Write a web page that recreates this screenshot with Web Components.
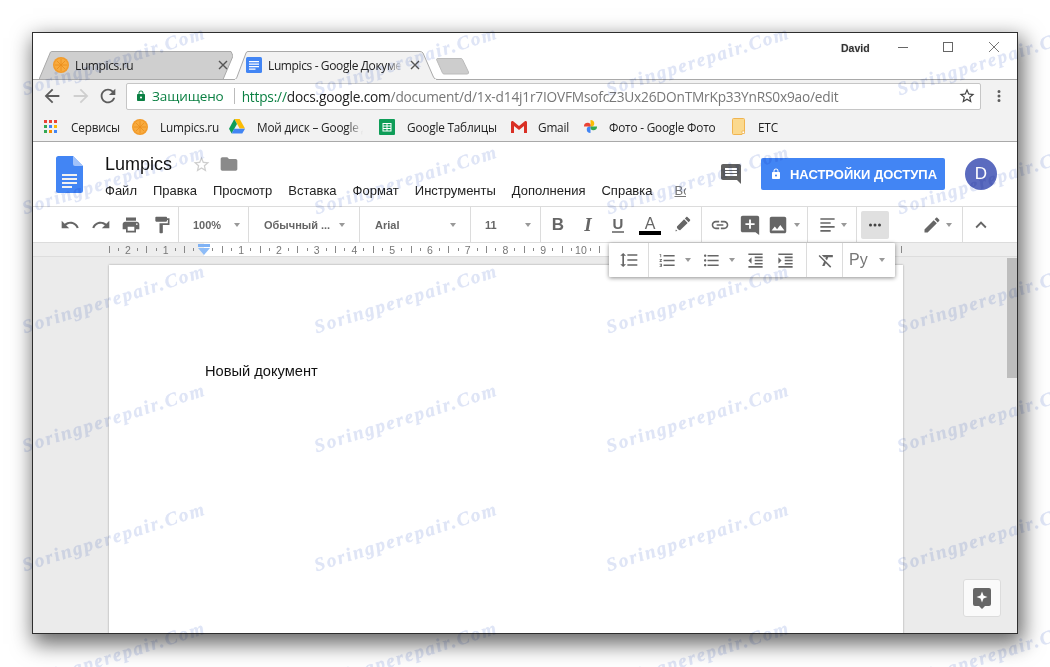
<!doctype html>
<html lang="ru"><head><meta charset="utf-8"><title>Lumpics - Google Документы</title>
<style>
html,body{margin:0;padding:0;background:#fff;overflow:hidden;width:1050px;height:667px;font-family:"Liberation Sans",Arial,sans-serif}
body{position:relative}
</style></head><body>
<x-desktop>
  <x-window>
    <x-tabstrip>
      <x-tab slot="tabs" label="Lumpics.ru" w="194" title-w="135" fav="orange"></x-tab>
      <x-tab slot="tabs" label="Lumpics - Google Документы" w="205" title-w="134" fav="doc" active></x-tab>
      <x-newtab slot="tabs"></x-newtab>
    </x-tabstrip>
    <x-omnibar></x-omnibar>
    <x-bookmarks></x-bookmarks>
    <x-docheader></x-docheader>
    <x-toolbar></x-toolbar>
    <x-ruler></x-ruler>
    <x-canvas>Новый документ</x-canvas>
    <x-floatbar></x-floatbar>
  </x-window>
</x-desktop>
<x-marks></x-marks>
<script>
const P={
undo:"M12.5 8c-2.65 0-5.05.99-6.9 2.6L2 7v9h9l-3.62-3.62c1.39-1.16 3.16-1.88 5.12-1.88 3.54 0 6.55 2.31 7.6 5.5l2.37-.78C21.08 11.03 17.15 8 12.5 8z",
redo:"M18.4 10.6C16.55 8.99 14.15 8 11.5 8c-4.65 0-8.58 3.03-9.96 7.22L3.9 16c1.05-3.19 4.05-5.5 7.6-5.5 1.95 0 3.73.72 5.12 1.88L13 16h9V7l-3.6 3.6z",
print:"M19 8H5c-1.66 0-3 1.34-3 3v6h4v4h12v-4h4v-6c0-1.66-1.34-3-3-3zm-3 11H8v-5h8v5zm3-7c-.55 0-1-.45-1-1s.45-1 1-1 1 .45 1 1-.45 1-1 1zm-1-9H6v4h12V3z",
paint:"M18 4V3c0-.55-.45-1-1-1H5c-.55 0-1 .45-1 1v4c0 .55.45 1 1 1h12c.55 0 1-.45 1-1V6h1v4H9v11c0 .55.45 1 1 1h2c.55 0 1-.45 1-1v-9h8V4h-3z",
pencil:"M3 17.25V21h3.75L17.81 9.94l-3.75-3.75L3 17.25zM20.71 7.04c.39-.39.39-1.02 0-1.41l-2.34-2.34c-.39-.39-1.02-.39-1.41 0l-1.83 1.83 3.75 3.75 1.83-1.83z",
marker:"M3 20.500l2.500-.3-1.800-1.800zM5 16.500l2.500 2.500 1.500.2 9.500-9.200-4.500-4.500-9 9zM15 4.300l4.700 4.700 1.800-1.800c.4-.4.4-1 0-1.400l-3.300-3.300c-.4-.4-1-.4-1.400 0z",
link:"M3.9 12c0-1.71 1.39-3.1 3.1-3.1h4V7H7c-2.76 0-5 2.24-5 5s2.24 5 5 5h4v-1.900H7c-1.710 0-3.100-1.390-3.100-3.100zM8 13h8v-2H8v2zm9-6h-4v1.900h4c1.710 0 3.100 1.390 3.100 3.100s-1.390 3.100-3.100 3.100h-4V17h4c2.760 0 5-2.240 5-5s-2.240-5-5-5z",
addc:"M22 4c0-1.100-.9-2-2-2H4c-1.100 0-2 .9-2 2v14c0 1.100.9 2 2 2h14l4 3zM17 12h-4v4h-2v-4H7v-2h4V6h2v4h4z",
image:"M21 19V5c0-1.100-.9-2-2-2H5c-1.100 0-2 .9-2 2v14c0 1.100.9 2 2 2h14c1.100 0 2-.9 2-2zM8.500 13.500l2.500 3.010L14.500 12l4.500 6H5z",
align:"M3 4h18v2H3zM3 9h13v2H3zM3 14h18v2H3zM3 19h13v2H3z",
less:"M12 8l-6 6 1.410 1.410L12 10.830l4.590 4.580L18 14z",
spacing:"M6 7h2.500L5 3.500 1.500 7H4v10H1.500L5 20.500 8.500 17H6V7zm4-2v2h12V5H10zm0 14h12v-2H10v2zm0-6h12v-2H10v2z",
num:"M2 17h2v.5H3v1h1v.5H2v1h3v-4H2v1zm1-9h1V4H2v1h1v3zm-1 3h1.800L2 13.100v.9h3v-1H3.200L5 10.900V10H2v1zm5-6v2h14V5H7zm0 14h14v-2H7v2zm0-6h14v-2H7v2z",
bul:"M4 10.500c-.83 0-1.500.67-1.500 1.500s.67 1.500 1.500 1.500 1.500-.67 1.500-1.500-.67-1.500-1.500-1.500zm0-6c-.83 0-1.500.67-1.500 1.500S3.170 7.500 4 7.500 5.500 6.830 5.500 6 4.830 4.500 4 4.500zm0 12c-.83 0-1.500.68-1.500 1.500s.68 1.500 1.500 1.500 1.500-.68 1.500-1.500-.67-1.500-1.500-1.500zM7 19h14v-2H7v2zm0-6h14v-2H7v2zm0-8v2h14V5H7z",
outd:"M11 17h10v-2H11v2zm-8-5l4 4V8l-4 4zm0 9h18v-2H3v2zM3 3v2h18V3H3zm8 6h10V7H11v2zm0 4h10v-2H11v2z",
ind:"M3 21h18v-2H3v2zM3 8v8l4-4-4-4zm8 9h10v-2H11v2zM3 3v2h18V3H3zm8 6h10V7H11v2zm0 4h10v-2H11v2z",
clear:"M3.270 5L2 6.270l6.970 6.970L6.500 19h3l1.570-3.660L16.730 21 18 19.730 3.550 5.270 3.270 5zM6 5v.18L8.820 8h2.400l-.72 1.680 2.100 2.100L14.210 8H20V5H6z",
lock:"M18 8h-1V6c0-2.760-2.240-5-5-5S7 3.240 7 6v2H6c-1.100 0-2 .9-2 2v10c0 1.100.9 2 2 2h12c1.100 0 2-.9 2-2V10c0-1.100-.9-2-2-2zm-6 9c-1.100 0-2-.9-2-2s.9-2 2-2 2 .9 2 2-.9 2-2 2zm3.100-9H8.900V6c0-1.710 1.390-3.100 3.100-3.100 1.710 0 3.100 1.390 3.100 3.100v2z",
comment:"M21.990 4c0-1.100-.89-2-1.990-2H4c-1.100 0-2 .9-2 2v12c0 1.100.9 2 2 2h14l4 4-.01-18zM18 14H6v-2h12v2zm0-3H6V9h12v2zm0-3H6V6h12v2z",
star:"M22 9.240l-7.190-.62L12 2 9.190 8.630 2 9.240l5.460 4.730L5.820 21 12 17.270 18.180 21l-1.630-7.030L22 9.240zM12 15.400l-3.760 2.270 1-4.280-3.320-2.880 4.380-.38L12 6.100l1.710 4.040 4.380.38-3.320 2.880 1 4.280L12 15.400z",
folder:"M10 4H4c-1.100 0-1.990.9-1.990 2L2 18c0 1.100.9 2 2 2h16c1.100 0 2-.9 2-2V8c0-1.100-.9-2-2-2h-8l-2-2z",
back:"M20 11H7.830l5.590-5.590L12 4l-8 8 8 8 1.410-1.410L7.830 13H20v-2z",
fwd:"M12 4l-1.410 1.410L16.170 11H4v2h12.170l-5.580 5.590L12 20l8-8z",
reload:"M17.650 6.350C16.200 4.900 14.210 4 12 4c-4.420 0-7.990 3.580-7.990 8s3.570 8 7.990 8c3.730 0 6.840-2.550 7.730-6h-2.080c-.82 2.330-3.040 4-5.650 4-3.310 0-6-2.690-6-6s2.690-6 6-6c1.660 0 3.140.69 4.220 1.780L13 11h7V4l-2.350 2.350z",
dots:"M6 10a2 2 0 1 0 0 4 2 2 0 0 0 0-4zm6 0a2 2 0 1 0 0 4 2 2 0 0 0 0-4zm6 0a2 2 0 1 0 0 4 2 2 0 0 0 0-4z",
vdots:"M12 8a2 2 0 1 0 0-4 2 2 0 0 0 0 4zm0 2a2 2 0 1 0 0 4 2 2 0 0 0 0-4zm0 6a2 2 0 1 0 0 4 2 2 0 0 0 0-4z"
};
function def(name,css,html){
  customElements.define(name,class extends HTMLElement{
    constructor(){super();this.attachShadow({mode:"open"});}
    connectedCallback(){
      const h=typeof html==="function"?html(this):html;
      this.shadowRoot.innerHTML="<style>"+(typeof css==="function"?css(this):css)+"</style>"+h;
    }
  });
}
const FAV={
orange:`<svg width="16" height="16" viewBox="0 0 16 16"><circle cx="8" cy="8" r="8" fill="#f29b2b"/><circle cx="8" cy="8" r="6.500" fill="#f8ab3f"/><g stroke="#ea8d1a" stroke-width=".8"><path d="M8 2v12M2 8h12M3.800 3.800l8.400 8.400M12.200 3.800l-8.400 8.400"/></g></svg>`,
doc:`<svg width="16" height="16" viewBox="0 0 16 16"><rect width="16" height="16" rx="1.500" fill="#4285f4"/><path d="M3 4h10v1.200H3zM3 6.500h10v1.200H3zM3 9h10v1.200H3zM3 11.500h6.500v1.200H3z" fill="#fff"/></svg>`,
drive:`<svg width="16" height="15" viewBox="0 0 16 15"><path d="M5.300 0h5.400l5.300 9.500h-5.300z" fill="#fbbc05"/><path d="M5.300 0L0 9.800 2.700 14.500 8 5z" fill="#0f9d58"/><path d="M2.700 14.500h10.600L16 9.800H5.300z" fill="#4285f4"/></svg>`,
sheets:`<svg width="16" height="16" viewBox="0 0 16 16"><rect width="16" height="16" rx="1" fill="#0f9d58"/><path d="M3.500 4h9v8.500h-9zM4.500 5v1.500h3V5zm4 0v1.500h3V5zm-4 2.500V9h3V7.500zm4 0V9h3V7.500zm-4 2.500v1.500h3V10zm4 0v1.500h3V10z" fill="#fff" fill-rule="evenodd"/></svg>`,
gmail:`<svg width="16" height="12" viewBox="0 0 16 12"><path d="M0 1.500V12h3V5l5 4 5-4v7h3V1.500C16 .2 14.700-.4 13.800.3L8 5 2.200.3C1.300-.4 0 .2 0 1.500z" fill="#d93025"/></svg>`,
photos:`<svg width="15" height="15" viewBox="0 0 16 16"><path d="M8 8V1a4 4 0 0 1 4 4 3 3 0 0 1-4 3z" fill="#fbbc05"/><path d="M8 8h7a4 4 0 0 1-4 4 3 3 0 0 1-3-4z" fill="#34a853"/><path d="M8 8v7a4 4 0 0 1-4-4 3 3 0 0 1 4-3z" fill="#4285f4"/><path d="M8 8H1a4 4 0 0 1 4-4 3 3 0 0 1 3 4z" fill="#ea4335"/></svg>`,
folder:`<svg width="13" height="17" viewBox="0 0 13 17"><path d="M.5 1.500a1 1 0 0 1 1-1h10a1 1 0 0 1 1 1v12l-2.500 3H1.500a1 1 0 0 1-1-1z" fill="#fbd98e" stroke="#f0b450"/><path d="M10 13h2.500v2.500H10z" fill="#fff" stroke="#f0b450" stroke-width=".8"/></svg>`,
apps:`<svg width="13" height="13" viewBox="0 0 13 13"><rect width="3" height="3" fill="#ea4335"/><rect x="5" width="3" height="3" fill="#ea4335"/><rect x="10" width="3" height="3" fill="#ea4335"/><rect y="5" width="3" height="3" fill="#34a853"/><rect x="5" y="5" width="3" height="3" fill="#4285f4"/><rect x="10" y="5" width="3" height="3" fill="#fbbc05"/><rect y="10" width="3" height="3" fill="#34a853"/><rect x="5" y="10" width="3" height="3" fill="#fb8c00"/><rect x="10" y="10" width="3" height="3" fill="#4285f4"/></svg>`
};
def("x-icon",`:host{display:inline-flex;flex:none;line-height:0}svg{display:block}`,t=>{
  const s=t.getAttribute("size")||20,c=t.getAttribute("color")||"#666";
  return `<svg width="${s}" height="${s}" viewBox="0 0 24 24" fill="${c}"><path d="${P[t.getAttribute("name")]}"/></svg>`;
});
def("x-caret",`:host{display:inline-block;flex:none;width:0;height:0;border-left:3.500px solid transparent;border-right:3.500px solid transparent;border-top:4px solid #999}`,"");
def("x-fav",`:host{display:inline-flex;flex:none;line-height:0}`,t=>FAV[t.getAttribute("kind")]);

def("x-desktop",`:host{display:block;padding:32px}`,`<slot></slot>`);
def("x-window",`:host{display:flex;flex-direction:column;position:relative;box-sizing:border-box;width:986px;height:602px;border:1px solid #2e2e2e;background:#fff;box-shadow:3px 8px 20px 2px rgba(0,0,0,.6);overflow:hidden}`,`<slot></slot>`);

def("x-tabstrip",`:host{display:flex;justify-content:space-between;flex:none;height:47px;box-shadow:inset 0 -1px #a9a9a9;background:#fff}
.tabs{display:flex;align-items:flex-end;padding-left:6px}
.ctl{display:flex;align-items:flex-start;padding:9px 18px 0 0;color:#555}
.who{font:bold 10.500px "Liberation Sans",sans-serif;color:#333;text-shadow:0 0 2px #fff,0 0 1px #888;margin:0 29px 0 0;width:28px}
svg{display:block}`,
`<div class="tabs"><slot name="tabs"></slot></div>
<div class="ctl"><span class="who">David</span>
<svg width="10" height="10" viewBox="0 0 10 10" style="margin:0 35px 0 0"><path d="M0 5.500h10" stroke="#666"/></svg>
<svg width="10" height="10" viewBox="0 0 10 10" style="margin:0 36px 0 0"><rect x=".5" y=".5" width="9" height="9" fill="none" stroke="#666"/></svg>
<svg width="10" height="10" viewBox="0 0 10 10"><path d="M0 0l10 10M10 0L0 10" stroke="#777"/></svg></div>`);

def("x-tab",t=>`:host{display:block;position:relative;flex:none;height:29px;width:${t.getAttribute("w")}px;${t.hasAttribute("active")?"z-index:2;":""}}
svg.bg{position:absolute;left:0;top:0}
.in{position:relative;display:flex;align-items:center;height:28px;padding-left:${t.hasAttribute("active")?13:14}px}
.t{font:12px "Open Sans","Noto Sans",sans-serif;letter-spacing:-.38px;color:#222;margin-left:6px;width:${t.getAttribute("title-w")}px;white-space:nowrap;overflow:hidden;${t.hasAttribute("active")?"-webkit-mask-image:linear-gradient(90deg,#000 88%,transparent);mask-image:linear-gradient(90deg,#000 88%,transparent);":""}}
svg.x{margin-left:8px;flex:none}`,
t=>{const a=t.hasAttribute("active"),w=+t.getAttribute("w");
 const d=a?`M0 29 C3 29 3.500 27 4 26 L13 2 Q13.500 .5 15 .5 H${w-18} Q${w-16} .5 ${w-15} 2 L${w-5} 25 C${w-4} 28 ${w-2} 28.500 ${w} 28.500 V29 Z`
          :`M0 28.500 L11.500 1 Q12 .5 13 .5 H${w-2} L${w-2} .5 L${w+0} 5 L${w-10} 28.500 Z`;
 return `<svg class="bg" width="${w}" height="29" viewBox="0 0 ${w} 29"><path d="${d}" fill="${a?"#f2f2f2":"#cfcfcf"}" stroke="#a9a9a9"/>${a?`<rect x="2" y="28" width="${w-4}" height="1" fill="#f2f2f2"/>`:""}</svg>
 <div class="in"><x-fav kind="${t.getAttribute("fav")}"></x-fav><span class="t">${t.getAttribute("label")}</span>
 <svg class="x" width="10" height="10" viewBox="0 0 10 10"><path d="M1 1l8 8M9 1L1 9" stroke="#555" stroke-width="1.400"/></svg></div>`;});
def("x-newtab",`:host{display:block;flex:none;margin:0 0 5px -3px;line-height:0}`,`<svg width="35" height="17" viewBox="0 0 35 17"><path d="M1.500 1.500Q1.500 .5 3 .5H26Q27 .5 27.500 1.500L33.500 14Q34 16 32 16H9Q8 16 7.500 15z" fill="#cdcdcd" stroke="#bbb"/></svg>`);

def("x-omnibar",`:host{display:flex;align-items:center;flex:none;height:32px;background:#f2f2f2;box-sizing:border-box;padding-left:4px}
.b{width:29px;display:flex;justify-content:center;flex:none}
.box{display:flex;align-items:center;box-sizing:border-box;width:855px;height:27px;margin-left:6px;background:#fff;border:1px solid #c6c6c6;border-radius:2px;padding:0 4px 0 8px;font:14px "Open Sans","Noto Sans",sans-serif}
.sec{color:#0b8043;margin-left:5px;font-size:13.500px;letter-spacing:-.1px}
.sep{width:1px;height:16px;background:#bbb;margin:0 7px 0 10px;flex:none}
.url{white-space:nowrap;color:#777;font-size:13.700px;letter-spacing:-.2px;flex:1;overflow:hidden}
.url b{font-weight:400;color:#0b8043}.url i{font-style:normal;color:#222}`,
`<div class="b"><x-icon name="back" size="22" color="#5c5c5c"></x-icon></div>
<div class="b"><x-icon name="fwd" size="22" color="#cfcfcf"></x-icon></div>
<div class="b" style="width:25px"><x-icon name="reload" size="22" color="#5c5c5c"></x-icon></div>
<div class="box"><x-icon name="lock" size="12" color="#0b8043"></x-icon><span class="sec">Защищено</span><span class="sep"></span>
<span class="url"><b>https://</b><i>docs.google.com</i>/document/d/1x-d14j1r7IOVFMsofcZ3Ux26DOnTMrKp33YnRS0x9ao/edit</span>
<x-icon name="star" size="18" color="#444"></x-icon></div>
<div class="b" style="width:36px"><x-icon name="vdots" size="18" color="#5c5c5c"></x-icon></div>`);

def("x-bookmarks",`:host{display:flex;align-items:center;flex:none;height:29px;background:#f2f2f2;padding-left:11px;border-bottom:1px solid #a9a9a9;font:11.800px "Open Sans","Noto Sans",sans-serif;letter-spacing:-.2px;color:#222}
span{white-space:nowrap}x-fav{align-items:center;justify-content:center}
.f{-webkit-mask-image:linear-gradient(90deg,#000 85%,transparent);mask-image:linear-gradient(90deg,#000 85%,transparent);overflow:hidden}`,
`<x-fav kind="apps"></x-fav><span style="margin-left:14px;width:61px">Сервисы</span>
<x-fav kind="orange"></x-fav><span style="margin-left:12px;width:69px">Lumpics.ru</span>
<x-fav kind="drive"></x-fav><span class="f" style="margin-left:12px;width:106px">Мой диск – Google Диск</span>
<x-fav kind="sheets" style="margin-left:16px"></x-fav><span style="margin-left:12px;width:104px">Google Таблицы</span>
<x-fav kind="gmail"></x-fav><span style="margin-left:11px;width:45px">Gmail</span>
<x-fav kind="photos"></x-fav><span style="margin-left:11px;width:123px">Фото - Google Фото</span>
<x-fav kind="folder"></x-fav><span style="margin-left:13px">ETC</span>`);

def("x-docheader",`:host{display:flex;flex:none;height:64px;background:#fff;font-family:"Liberation Sans",sans-serif}
.logo{margin:14px 0 0 23px;flex:none;line-height:0}
.mid{margin-left:22px;width:581px;flex:none}
.tr{display:flex;align-items:center;height:24px;margin-top:10px}
.ti{font-size:18px;color:#111;width:87px}
.menu{display:flex;gap:16px;font-size:13px;color:#222;margin-top:4px;height:20px;align-items:center;overflow:hidden;white-space:nowrap}
.menu u{color:#777}
.r{display:flex;align-items:flex-start;margin-left:33px;padding-top:16px}
.btn{display:flex;align-items:center;box-sizing:border-box;width:184px;height:32px;background:#4285f4;border-radius:2px;color:#fff;font:bold 13px "Liberation Sans",sans-serif;letter-spacing:-.03px;padding-left:9px;margin-left:18px;white-space:nowrap}
.btn span{margin-left:8px}
.av{width:32px;height:32px;border-radius:50%;background:#5b6bbf;color:#fff;font-size:17px;display:flex;align-items:center;justify-content:center;margin-left:20px}`,
`<div class="logo"><svg width="27" height="37" viewBox="0 0 27 37"><path d="M2.500 0H17l10 10v24.500a2.500 2.500 0 0 1-2.500 2.500h-22A2.500 2.500 0 0 1 0 34.500v-32A2.500 2.500 0 0 1 2.500 0z" fill="#4285f4"/><path d="M17 0l10 10h-8a2 2 0 0 1-2-2z" fill="#a1c2fa"/><path d="M6 18h15v2H6zM6 22h15v2H6zM6 26h15v2H6zM6 30h10v2H6z" fill="#f1f1f1"/></svg></div>
<div class="mid"><div class="tr"><span class="ti">Lumpics</span><x-icon name="star" size="19" color="#cfcfcf"></x-icon><x-icon name="folder" size="20" color="#8a8a8a" style="margin-left:8px"></x-icon></div>
<div class="menu"><span>Файл</span><span>Правка</span><span>Просмотр</span><span>Вставка</span><span>Формат</span><span>Инструменты</span><span>Дополнения</span><span>Справка</span><u style="margin-left:6px">Все изменения сохранены</u></div></div>
<div class="r"><x-icon name="comment" size="24" color="#616161" style="margin-top:4px"></x-icon>
<div class="btn"><x-icon name="lock" size="12" color="#fff"></x-icon><span>НАСТРОЙКИ ДОСТУПА</span></div><div class="av">D</div></div>`);

def("x-tg",t=>`:host{display:flex;align-items:center;flex:none;box-sizing:border-box;height:100%;width:${t.getAttribute("w")}px;padding-left:${t.getAttribute("pl")||0}px;padding-right:${t.getAttribute("pr")||0}px;${t.hasAttribute("nb")?"":"border-right:1px solid #dcdcdc;"}${t.hasAttribute("sb")?"justify-content:space-between;":""}font:bold 11px "Liberation Sans",sans-serif;color:#666}`,`<slot></slot>`);
def("x-t",t=>`:host{display:flex;align-items:center;justify-content:center;flex:none;width:${t.getAttribute("w")||30}px;height:28px;${t.getAttribute("m")?"margin-left:"+t.getAttribute("m")+"px;":""}${t.hasAttribute("on")?"background:#e0e0e0;border-radius:2px;":""}}`,`<slot></slot>`);

const G=(n,s,m)=>`<x-icon name="${n}" size="${s||20}"${m?` color="${m}"`:""}></x-icon>`;
def("x-toolbar",`:host{display:flex;flex:none;height:35px;background:#fff;border-top:1px solid #dcdcdc;border-bottom:1px solid #dcdcdc}
.B{font:bold 17px "Liberation Sans",sans-serif;color:#666}.I{font:italic bold 19px "Liberation Serif",serif;color:#666}
.U{font:bold 15px "Liberation Sans",sans-serif;color:#666;border-bottom:2px solid #888;line-height:14px;padding:0 1px;margin-top:1px}
.A{font:16px "Liberation Sans",sans-serif;color:#666;border-bottom:4px solid #000;line-height:14px;margin-top:3px;width:22px;text-align:center}`,
`<x-tg w="146" pl="21"><x-t w="31">${G("undo")}</x-t><x-t w="31">${G("redo")}</x-t><x-t w="30">${G("print")}</x-t><x-t w="31">${G("paint")}</x-t></x-tg>
<x-tg w="70" pl="14" pr="8" sb><span>100%</span><x-caret></x-caret></x-tg>
<x-tg w="111" pl="15" pr="14" sb><span>Обычный ...</span><x-caret></x-caret></x-tg>
<x-tg w="111" pl="15" pr="14" sb><span>Arial</span><x-caret></x-caret></x-tg>
<x-tg w="70" pl="14" pr="9" sb><span>11</span><x-caret></x-caret></x-tg>
<x-tg w="161" pl="2"><x-t><span class="B">B</span></x-t><x-t><span class="I">I</span></x-t><x-t><span class="U">U</span></x-t><x-t w="34"><span class="A">A</span></x-t><x-t>${G("marker",19)}</x-t></x-tg>
<x-tg w="106" pl="3"><x-t>${G("link")}</x-t><x-t>${G("addc",22)}</x-t><x-t w="25">${G("image",22)}</x-t><x-caret style="margin-left:4px"></x-caret></x-tg>
<x-tg w="49" pl="9"><x-t w="20">${G("align",19)}</x-t><x-caret style="margin-left:4px"></x-caret></x-tg>
<x-tg w="106" pl="4"><x-t w="28" on>${G("dots",18,"#444")}</x-t><x-t w="28" m="29">${G("pencil")}</x-t><x-caret></x-caret></x-tg>
<x-tg w="55" pl="4" nb><x-t w="28">${G("less",22)}</x-t></x-tg>`);

def("x-floatbar",`:host{display:flex;position:absolute;left:576px;top:210px;width:286px;height:34px;background:#fff;border-radius:1px;box-shadow:0 1px 4px rgba(0,0,0,.45);z-index:5}
.P{font:16px "Liberation Sans",sans-serif;color:#777}`,
`<x-tg w="40" pl="5"><x-t>${G("spacing")}</x-t></x-tg>
<x-tg w="158" pl="5"><x-t w="26">${G("num",19)}</x-t><x-caret style="margin-left:5px"></x-caret><x-t w="26" m="7">${G("bul",19)}</x-t><x-caret style="margin-left:4.500px"></x-caret><x-t w="30" m="5.500">${G("outd",19)}</x-t><x-t>${G("ind",19)}</x-t></x-tg>
<x-tg w="36" pl="4"><x-t>${G("clear",19)}</x-t></x-tg>
<x-tg w="52" pl="6" nb><span class="P">Ру</span><x-caret style="margin-left:11px"></x-caret></x-tg>`);

def("x-ruler",`:host{display:flex;flex:none;height:14px;box-sizing:border-box;padding-left:71.3px;background:linear-gradient(90deg,#eee 171px,#fff 171px,#fff 774px,#eee 774px);border-bottom:1px solid #ddd;position:relative;font:10.500px "Liberation Sans",sans-serif;color:#777}
.c{width:9.450px;flex:none;display:flex;align-items:center;justify-content:center;height:13px}
.b{width:1px;height:7px;background:#888}.d{width:1px;height:3px;background:#888}
svg{position:absolute;left:165px;top:1px}`,
t=>{let h="";for(let q=0;q<=84;q++){
  const m=q%4;let c;
  if(m===2){const abs=Math.abs(q-10)/4;c=abs===0?"":`<span>${abs}</span>`;}
  else if(m===0)c=`<i class="b"></i>`;else c=`<i class="d"></i>`;
  h+=`<div class="c">${c}</div>`;}
 return h+`<svg width="12" height="12" viewBox="0 0 12 12"><path d="M0 0h12v3H0z" fill="#7fb2f5"/><path d="M0 4h12L6 11z" fill="#8ebcf7"/></svg>`;});

def("x-canvas",`:host{display:flex;flex:1;min-height:0;background:#ebebeb;position:relative;overflow:hidden}
.sc{flex:1;padding:8px 0 0 76px}
.pg{box-sizing:border-box;width:794px;height:400px;background:#fff;box-shadow:0 0 2px rgba(0,0,0,.35);padding:98px 0 0 96px;font:14.670px/17px "Liberation Sans",sans-serif;color:#111}
.bar{width:11px;flex:none;box-sizing:border-box;padding:1px 0 0 1px}
.th{height:120px;background:#bdbdbd}
.fb{position:absolute;right:16px;bottom:16px;width:38px;height:38px;box-sizing:border-box;background:#fafafa;border:1px solid #dcdcdc;border-radius:3px;display:flex;align-items:center;justify-content:center}`,
`<div class="sc"><div class="pg"><slot></slot></div></div><div class="bar"><div class="th"></div></div>
<div class="fb"><svg width="18" height="21" viewBox="0 0 18 21"><path d="M2 0h14a2 2 0 0 1 2 2v14a2 2 0 0 1-2 2h-4l-3 3-3-3H2a2 2 0 0 1-2-2V2a2 2 0 0 1 2-2z" fill="#666"/><path d="M9 3.500l1.500 4 4 1.500-4 1.500-1.500 4-1.500-4-4-1.500 4-1.500z" fill="#fff"/></svg></div>`);

def("x-wm",t=>`:host{position:absolute;left:${t.getAttribute("x")}px;top:${t.getAttribute("y")}px;transform:translate(-50%,-50%) rotate(-17.500deg);white-space:nowrap;font:italic bold 19px "Liberation Serif",serif;letter-spacing:1.800px;color:#dfe5f6;text-shadow:0 0 1px #e8ecf8;pointer-events:none}`,`Soringperepair.Com`);
def("x-marks",`:host{position:absolute;inset:0;overflow:hidden;pointer-events:none;z-index:20;mix-blend-mode:multiply}`,()=>{
  let h="";
  [113.500,406,697.500,989].forEach(x=>[61,180,299,418,537,656].forEach(y=>h+=`<x-wm x="${x}" y="${y}"></x-wm>`));
  return h;
});
</script>
</body></html>
